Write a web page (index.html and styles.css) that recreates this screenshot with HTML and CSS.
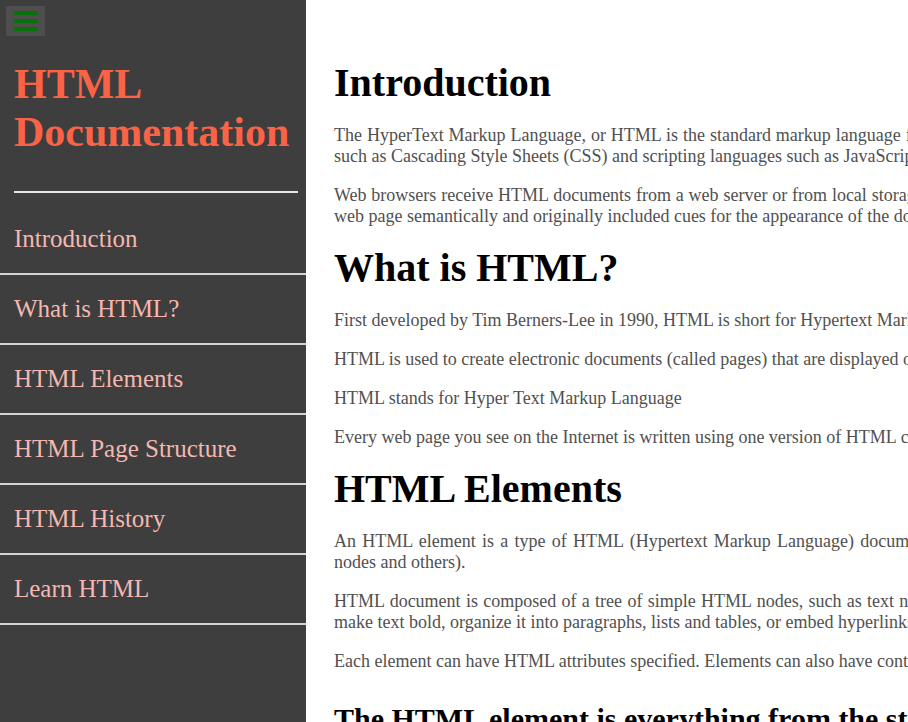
FILE: index.html
```html
<!DOCTYPE html>
<html lang="en">
<head>
<meta charset="utf-8">
<title>HTML Documentation</title>
<link rel="stylesheet" href="styles.css">
</head>
<body>
<div class="page">
  <nav class="sidebar" id="navbar">
    <div class="menu-btn" aria-label="Menu">
      <span class="bar"></span>
      <span class="bar"></span>
      <span class="bar"></span>
    </div>
    <header class="brand">HTML Documentation</header>
    <hr class="rule">
    <ul class="nav-list">
      <li><a class="nav-link" href="#Introduction">Introduction</a></li>
      <li><a class="nav-link" href="#What_is_HTML?">What is HTML?</a></li>
      <li><a class="nav-link" href="#HTML_Elements">HTML Elements</a></li>
      <li><a class="nav-link" href="#HTML_Page_Structure">HTML Page Structure</a></li>
      <li><a class="nav-link" href="#HTML_History">HTML History</a></li>
      <li><a class="nav-link" href="#Learn_HTML">Learn HTML</a></li>
    </ul>
  </nav>
  <main class="main" id="main-doc">
    <section class="main-section" id="Introduction">
      <h1 class="sec-title">Introduction</h1>
      <p>The HyperText Markup Language, or HTML is the standard markup language for documents designed to be displayed in a web browser. It can be assisted by technologies such as Cascading Style Sheets (CSS) and scripting languages such as JavaScript.</p>
      <p>Web browsers receive HTML documents from a web server or from local storage and render the documents into multimedia web pages. HTML describes the structure of a web page semantically and originally included cues for the appearance of the document.</p>
    </section>
    <section class="main-section" id="What_is_HTML?">
      <h1 class="sec-title">What is HTML?</h1>
      <p>First developed by Tim Berners-Lee in 1990, HTML is short for Hypertext Markup Language.</p>
      <p>HTML is used to create electronic documents (called pages) that are displayed on the World Wide Web.</p>
      <p>HTML stands for Hyper Text Markup Language</p>
      <p>Every web page you see on the Internet is written using one version of HTML code or another.</p>
    </section>
    <section class="main-section" id="HTML_Elements">
      <h1 class="sec-title">HTML Elements</h1>
      <p>An HTML element is a type of HTML (Hypertext Markup Language) document component, one of several types of HTML nodes (there are also text nodes, comment nodes and others).</p>
      <p>HTML document is composed of a tree of simple HTML nodes, such as text nodes, and HTML elements, which add semantics and formatting to parts of document (e.g., make text bold, organize it into paragraphs, lists and tables, or embed hyperlinks and images).</p>
      <p>Each element can have HTML attributes specified. Elements can also have content, including other elements and text.</p>
      <h2 class="sub-title">The HTML element is everything from the start tag to the end tag:</h2>
      <p>&lt;tagname&gt;Content goes here...&lt;/tagname&gt;</p>
    </section>
  </main>
</div>
</body>
</html>
```
FILE: styles.css
```css
html, body {
  margin: 0;
  padding: 0;
  overflow: hidden;
}

body {
  font-family: "Liberation Serif", "Times New Roman", serif;
  background: #ffffff;
}

.page {
  display: flex;
  height: 100vh;
  overflow: hidden;
}

.sidebar {
  flex: 0 0 306px;
  width: 306px;
  background: #3e3e3e;
  padding-top: 6px;
  box-sizing: border-box;
  display: flex;
  flex-direction: column;
}

.menu-btn {
  margin-left: 6px;
  width: 39px;
  height: 30px;
  background: #4e4e4e;
  display: flex;
  flex-direction: column;
  justify-content: center;
  align-items: center;
  gap: 4.5px;
}

.bar {
  display: block;
  width: 24px;
  height: 3.5px;
  background: #087208;
  border-radius: 1px;
}

.brand {
  margin: 24px 0 0;
  padding-left: 14px;
  font-size: 42px;
  font-weight: bold;
  line-height: 48px;
  color: #fb6347;
}

.rule {
  border: 0;
  height: 2px;
  background: #e6e6e6;
  margin: 35px 8px 12px 14px;
}

.nav-list {
  list-style: none;
  margin: 0;
  padding: 0;
}

.nav-list li {
  border-bottom: 2px solid #d4d4d4;
}

.nav-link {
  display: block;
  padding: 19px 0 20px 14px;
  font-size: 25px;
  line-height: 29px;
  color: #f5b7b0;
  text-decoration: none;
}

.main {
  flex: 0 0 auto;
  width: 1240px;
  padding: 60px 0 0 28px;
}

.sec-title {
  margin: 0 0 19px;
  font-size: 40px;
  line-height: 46px;
  font-weight: bold;
  color: #000;
}

.main-section p {
  margin: 0 0 18px;
  font-size: 18px;
  line-height: 21px;
  color: #505050;
  text-align: justify;
}

.sub-title {
  margin: 30px 0 18px;
  font-size: 30px;
  line-height: 34px;
  font-weight: bold;
  color: #000;
}
```
